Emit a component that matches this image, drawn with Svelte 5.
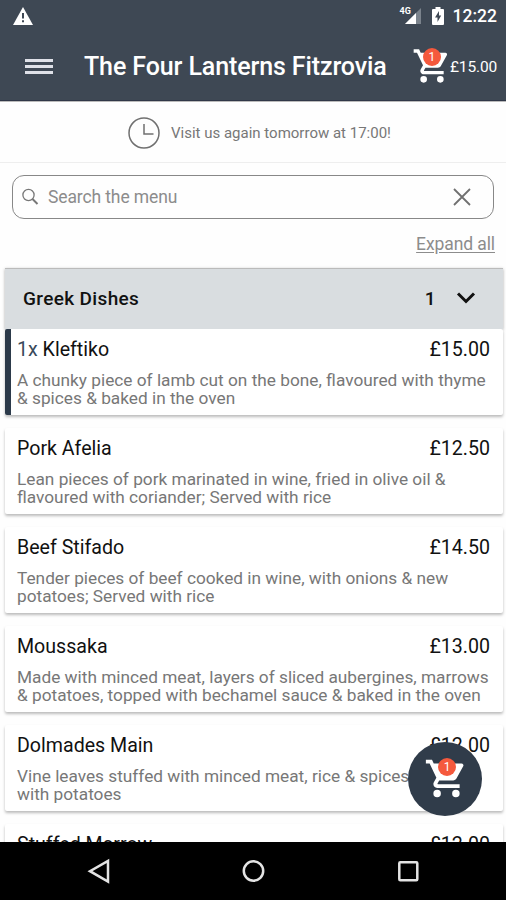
<script lang="ts">
	interface Dish {
		name: string;
		price: string;
		lines: string[];
		quantity?: number;
	}

	const dishes: Dish[] = [
		{ name: 'Kleftiko', price: '£15.00', quantity: 1, lines: ['A chunky piece of lamb cut on the bone, flavoured with thyme', '& spices & baked in the oven'] },
		{ name: 'Pork Afelia', price: '£12.50', lines: ['Lean pieces of pork marinated in wine, fried in olive oil &', 'flavoured with coriander; Served with rice'] },
		{ name: 'Beef Stifado', price: '£14.50', lines: ['Tender pieces of beef cooked in wine, with onions & new', 'potatoes; Served with rice'] },
		{ name: 'Moussaka', price: '£13.00', lines: ['Made with minced meat, layers of sliced aubergines, marrows', '& potatoes, topped with bechamel sauce & baked in the oven'] },
		{ name: 'Dolmades Main', price: '£12.00', lines: ['Vine leaves stuffed with minced meat, rice & spices', 'with potatoes'] },
		{ name: 'Stuffed Marrow', price: '£12.00', lines: [] }
	];

	let query = $state('');
	let open = $state(true);
</script>

{#snippet cart(size: number)}
	<svg width={size} height={size} viewBox="0 0 24 24" fill="#fff">
		<path d="M7 18a2 2 0 1 0 0 4 2 2 0 0 0 0-4zM1 2v2h2l3.6 7.6-1.35 2.4C4.5 15.4 5.5 17 7 17h12v-2H7.4c-.2 0-.3-.2-.2-.4l.9-1.6h7.45c.75 0 1.4-.4 1.75-1L20.9 5.5A1 1 0 0 0 20 4H5.2l-.93-2zM17 18a2 2 0 1 0 0 4 2 2 0 0 0 0-4z" />
	</svg>
	<span class="badge">1</span>
{/snippet}

<div class="screen">
	<div class="status">
		<svg class="warning" width="20" height="18" viewBox="0 0 20 18">
			<path d="M10 0 20 18H0z" fill="#fff" />
			<path d="M10 6v5.5M10 13.3v2" stroke="#3e4854" stroke-width="2" />
		</svg>
		<div class="signal">
			<svg width="20" height="18" viewBox="0 0 20 18">
				<path d="M20 1v16H4z" fill="#7b838c" />
				<path d="M15 6v11H4z" fill="#fff" />
			</svg>
			<span class="network">4G</span>
		</div>
		<svg class="battery" width="12" height="18" viewBox="0 0 12 18">
			<path d="M3.5 0h5v2H11q1 0 1 1v14q0 1-1 1H1q-1 0-1-1V3q0-1 1-1h2.500z" fill="#fff" />
			<path d="M7 4 3 10.500h2.500V15L9.200 8.600H7z" fill="#3e4854" />
		</svg>
		<span class="time">12:22</span>
	</div>

	<header>
		<button class="menu" aria-label="Menu"><i></i><i></i><i></i></button>
		<h1>The Four Lanterns Fitzrovia</h1>
		<button class="basket">{@render cart(40)}</button>
		<span class="total">£15.00</span>
	</header>

	<div class="notice">
		<svg width="32" height="32" viewBox="0 0 32 32" fill="none" stroke="#707070" stroke-width="1.500">
			<circle cx="16" cy="16" r="15" />
			<path d="M16 7v10h9.500" />
		</svg>
		<span>Visit us again tomorrow at 17:00!</span>
	</div>

	<div class="search">
		<svg width="18" height="18" viewBox="0 0 18 18" fill="none" stroke="#777">
			<circle cx="7.500" cy="7" r="5.600" stroke-width="1.300" />
			<path d="m11.500 11 5 5" stroke-width="2" />
		</svg>
		<input placeholder="Search the menu" bind:value={query} />
		<button class="clear" aria-label="Clear" onclick={() => (query = '')}>
			<svg width="18" height="18" viewBox="0 0 18 18" stroke="#707070" stroke-width="1.800">
				<path d="m1 1 16 16M17 1 1 17" />
			</svg>
		</button>
	</div>
	<div class="tools"><button class="expand" onclick={() => (open = true)}>Expand all</button></div>

	<button class="category" onclick={() => (open = !open)}>
		<span class="title">Greek Dishes</span>
		<span class="count">1</span>
		<svg width="20" height="14" viewBox="0 0 20 14" fill="none" stroke="#111" stroke-width="3">
			<path d="m2 2.500 8 8 8-8" />
		</svg>
	</button>

	<div class="dishes">
		{#if open}
			{#each dishes as dish}
				<article class:selected={dish.quantity}>
					<div class="heading">
						<span>{#if dish.quantity}<span class="quantity">{dish.quantity}x</span>{' '}{/if}{dish.name}</span>
						<span class="price">{dish.price}</span>
					</div>
					<p>
						{#each dish.lines as line}
							<span>{line}</span>
						{/each}
					</p>
				</article>
			{/each}
		{/if}
	</div>

	<button class="fab">{@render cart(45)}</button>

	<nav>
		<svg width="506" height="58" viewBox="0 0 506 58" fill="none" stroke="#e4e4e4" stroke-width="2.500">
			<path d="M108 19v20.500L90 29.200z" />
			<circle cx="253.500" cy="29" r="9.700" />
			<rect x="399.300" y="20.300" width="18" height="18" rx="1" />
		</svg>
	</nav>
</div>

<style>
	:global(body) {
		background: #fff;
	}

	.screen {
		position: relative;
		display: flex;
		flex-direction: column;
		width: 506px;
		height: 900px;
		overflow: hidden;
		background: #fefefe;
		font-family: Roboto, sans-serif;
		color: #111;
	}

	button {
		padding: 0;
		border: 0;
		background: none;
		font: inherit;
		color: inherit;
	}

	svg {
		display: block;
		flex: none;
	}

	.status {
		display: flex;
		align-items: center;
		height: 32px;
		padding: 0 9px 0 13px;
		background: #3e4854;
		color: #fff;
	}

	.warning {
		margin-right: auto;
	}

	.signal {
		position: relative;
		margin-right: 11px;
	}

	.network {
		position: absolute;
		top: 0;
		left: -1px;
		font-size: 9px;
		line-height: 9px;
		font-weight: 700;
	}

	.battery {
		margin-right: 9px;
	}

	.time {
		font-size: 17.500px;
		font-weight: 500;
		line-height: 32px;
	}

	header {
		display: flex;
		align-items: center;
		box-sizing: border-box;
		height: 69px;
		padding: 0 9px 0 25px;
		border-bottom: 1px solid #303747;
		background: #3e4854;
		color: #fff;
	}

	.menu {
		display: flex;
		flex-direction: column;
		gap: 3px;
		width: 28px;
		margin-right: 31px;
	}

	.menu i {
		height: 3px;
		background: #dfe1e8;
	}

	h1 {
		flex: 1;
		margin: 0;
		padding-top: 2px;
		font-size: 25px;
		font-weight: 500;
		letter-spacing: -0.110px;
		line-height: 32px;
		white-space: nowrap;
	}

	.basket {
		position: relative;
		margin-right: -2px;
	}

	.badge {
		position: absolute;
		top: 2px;
		left: 11px;
		width: 18px;
		height: 18px;
		border-radius: 50%;
		background: #f5593d;
		color: #fff;
		font-size: 12px;
		line-height: 18px;
		text-align: center;
	}

	.total {
		padding-top: 2px;
		font-size: 15.500px;
		letter-spacing: -0.150px;
	}

	.notice {
		display: flex;
		align-items: center;
		gap: 11px;
		box-sizing: border-box;
		height: 62px;
		padding: 1px 0 0 128px;
		border-top: 1px solid #bbb;
		border-bottom: 1px solid #eee;
		color: #777;
		font-size: 15px;
	}

	.notice span {
		padding-top: 1px;
	}

	.search {
		display: flex;
		align-items: center;
		box-sizing: border-box;
		height: 44px;
		margin: 12px 12px 0;
		padding: 0 22px 0 8px;
		border: 1.500px solid #888;
		border-radius: 12px;
	}

	input {
		flex: 1;
		min-width: 0;
		padding: 0;
		margin-left: 9px;
		border: 0;
		outline: 0;
		background: none;
		font: 17.500px Roboto, sans-serif;
		letter-spacing: -0.120px;
	}

	input::placeholder {
		color: #8c8c8c;
	}

	.tools {
		display: flex;
		justify-content: flex-end;
		align-items: center;
		height: 49px;
		padding: 0 11px 0 0;
		box-sizing: border-box;
	}

	.expand {
		color: #8c8c8c;
		font-size: 17.500px;
		letter-spacing: -0.100px;
		line-height: 22px;
		text-decoration: underline;
		text-underline-offset: 2px;
	}

	.category {
		display: flex;
		flex: none;
		align-items: center;
		box-sizing: border-box;
		height: 61px;
		margin: 0 3px 0 5px;
		padding: 0 27px 2px 18px;
		border-top: 1px solid #bbb;
		background: #d9dde0;
		box-shadow: 0 1px 3px #aaa;
		font-size: 19px;
		font-weight: 500;
		letter-spacing: 0.350px;
		text-align: left;
	}

	.title {
		flex: 1;
	}

	.count {
		margin-right: 20px;
	}

	.dishes {
		position: relative;
		flex: 1;
		min-height: 0;
		overflow: hidden;
	}

	article {
		box-sizing: border-box;
		height: 86px;
		margin: 0 3px 13px 5px;
		padding: 10px 13px 0 12px;
		border-radius: 2px;
		background: #fff;
		box-shadow: 0 2px 3px #bbb;
	}

	.selected {
		padding-left: 6px;
		border-left: 6px solid #2c3a4a;
	}

	.heading {
		display: flex;
		justify-content: space-between;
		font-size: 19.600px;
		line-height: 22px;
	}

	.quantity {
		color: #38495b;
	}

	p {
		margin: 11px 0 0;
		color: #777;
		font-size: 17.250px;
		line-height: 17.500px;
		white-space: nowrap;
	}

	p span {
		display: block;
	}

	.fab {
		position: absolute;
		top: 742px;
		left: 408px;
		width: 74px;
		height: 74px;
		border-radius: 50%;
		background: #303c4a;
	}

	.fab svg {
		margin: 0 0 0 16px;
		transform: translateY(-1px);
	}

	.fab .badge {
		top: 16px;
		left: 30px;
	}

	nav {
		flex: none;
		height: 58px;
		background: #000;
	}
</style>
